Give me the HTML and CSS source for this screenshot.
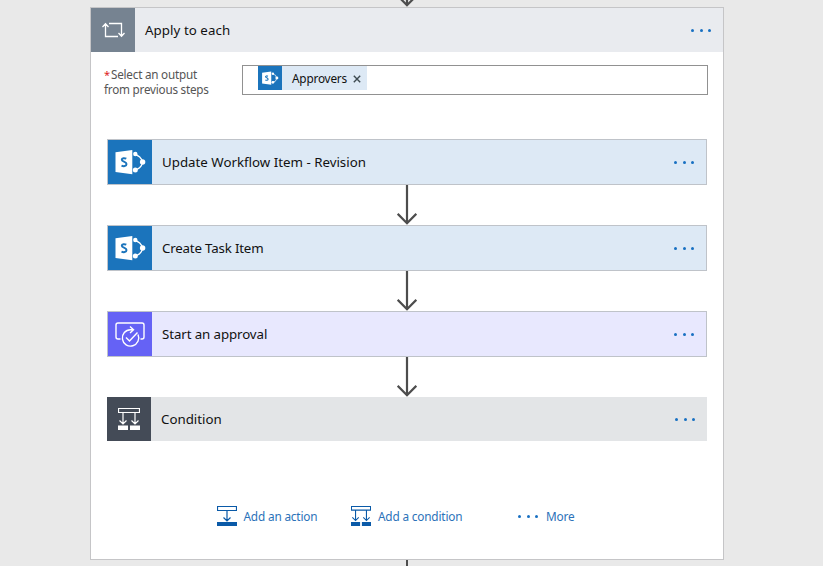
FILE: index.html
```html
<!DOCTYPE html>
<html lang="en">
<head>
<meta charset="utf-8">
<title>Apply to each</title>
<link rel="stylesheet" href="styles.css">
</head>
<body>
<svg width="0" height="0" class="defs">
  <symbol id="sharepoint" viewBox="0 0 44 44">
    <path d="M26 14.500a9 9 0 0 1 8.500 8a9 9 0 0 1-8.500 7.500" fill="none" stroke="#fff" stroke-width="1.300"/>
    <circle cx="27.300" cy="14" r="2.200" fill="#fff"/>
    <circle cx="34.600" cy="22" r="2.700" fill="#fff"/>
    <circle cx="27.300" cy="30" r="2.500" fill="#fff"/>
    <path d="M7.500 12.200 24.300 10v24.200L7.500 32z" fill="#fff"/>
    <path d="M18.300 18.700c-1.600-.8-4.500-.9-4.500 1.100 0 2.200 4.700 1.600 4.700 4.300 0 2.300-3.100 2.400-5 1.500" fill="none" stroke="#1b74bc" stroke-width="2"/>
  </symbol>
  <symbol id="arrow" viewBox="0 0 20 40">
    <path d="M10 0v38M.7 28.800 10 38.300l9.300-9.500" fill="none" stroke="#4d4d4d" stroke-width="2.200"/>
  </symbol>
  <symbol id="branch" viewBox="0 0 22 22">
    <path d="M.5.500h21v4H.5zM5 4.500v11.500M1.500 12.500 5 16l3.500-3.500M17 4.500v11.500M13.500 12.500 17 16l3.500-3.500" fill="none" stroke="currentColor" stroke-width="1.200"/>
    <path d="M0 17.500h10V22H0zM12 17.500h10V22H12z" fill="currentColor"/>
  </symbol>
</svg>
<svg class="arrow arrow-in"><use href="#arrow"/></svg>
<main class="panel">
  <header class="head">
    <div class="tile loop">
      <svg width="44" height="44" fill="none" stroke="#fff" stroke-width="1.300"><path d="M14.500 16.500V28.500H27M11.500 19l3-3.200 3 3.200M18 15.500H30.500V28M27.500 25l3 3.200 3-3.200"/></svg>
    </div>
    <span class="title t-head">Apply to each</span>
    <span class="dots"><i></i><i></i><i></i></span>
  </header>
  <div class="field">
    <div class="label">
      <div class="line"><span class="star">*</span><span>Select an output</span></div>
      <div class="line">from previous steps</div>
    </div>
    <div class="input">
      <div class="token">
        <div class="mini"><svg width="24" height="24"><use href="#sharepoint"/></svg></div>
        <span class="token-name">Approvers</span>
        <svg class="close" width="8" height="8"><path d="M.8.800 7.200 7.200M7.200.800.800 7.200" stroke="#3d4a50" stroke-width="1.400"/></svg>
      </div>
    </div>
  </div>
  <section class="steps">
    <div class="card">
      <div class="tile sp"><svg width="44" height="44"><use href="#sharepoint"/></svg></div>
      <span class="title">Update Workflow Item - Revision</span>
      <span class="dots"><i></i><i></i><i></i></span>
    </div>
    <svg class="arrow"><use href="#arrow"/></svg>
    <div class="card">
      <div class="tile sp"><svg width="44" height="44"><use href="#sharepoint"/></svg></div>
      <span class="title t-task">Create Task Item</span>
      <span class="dots"><i></i><i></i><i></i></span>
    </div>
    <svg class="arrow"><use href="#arrow"/></svg>
    <div class="card approval">
      <div class="tile ap">
        <svg width="44" height="44" fill="none" stroke="#fff" stroke-width="1.400"><path d="M12.500 27H10a2 2 0 0 1-2-2V13a2 2 0 0 1 2-2H34a2 2 0 0 1 2 2V25a2 2 0 0 1-2 2H32.500M25 17.700H22.500A8.200 8.200 0 1 0 30 22.500M22 14.500l3.500 3.200-3.500 3.200M18 25.500l3.500 3.500 8-8.500"/></svg>
      </div>
      <span class="title t-approval">Start an approval</span>
      <span class="dots"><i></i><i></i><i></i></span>
    </div>
    <svg class="arrow"><use href="#arrow"/></svg>
    <div class="card condition">
      <div class="tile cond"><svg width="22" height="22"><use href="#branch"/></svg></div>
      <span class="title">Condition</span>
      <span class="dots"><i></i><i></i><i></i></span>
    </div>
  </section>
  <footer class="actions">
    <a class="action add"><svg width="20" height="20"><path d="M.5.500h19v4H.5zM10 4.500V15M6.500 11.500 10 15l3.500-3.500" fill="none" stroke="#0a5aa8" stroke-width="1.200"/><path d="M0 16h20v4H0z" fill="#0a5aa8"/></svg><span>Add an action</span></a>
    <a class="action cnd"><svg width="20" height="20"><use href="#branch"/></svg><span>Add a condition</span></a>
    <a class="action more"><span class="dots"><i></i><i></i><i></i></span><span>More</span></a>
  </footer>
</main>
<div class="tail"></div>
</body>
</html>
```
FILE: styles.css
```css
* { box-sizing: border-box; }
body {
  margin: 0;
  height: 566px;
  overflow: hidden;
  background: #e9e9e9;
  font-family: "Noto Sans", "Open Sans", sans-serif;
  color: #111;
}
svg { display: block; flex: none; }
.defs { position: absolute; }
.arrow { width: 20px; height: 40px; margin-left: 290px; }
.arrow-in { margin: -33px 0 0 397px; }
.panel {
  width: 634px;
  height: 553px;
  margin-left: 90px;
  background: #fff;
  border: 1px solid #c5c5c7;
}
.head, .card { display: flex; align-items: center; }
.head { height: 44px; background: #e9ebef; padding-right: 12px; }
.tile {
  width: 44px;
  height: 44px;
  flex: none;
  display: flex;
  align-items: center;
  justify-content: center;
}
.loop { background: #768391; }
.sp { background: #1b74bc; }
.ap { background: #6562f5; }
.cond { background: #444b57; color: #fff; }
.title {
  margin-left: 10px;
  font-size: 13.3px;
  line-height: 20px;
  white-space: nowrap;
}
.t-head { letter-spacing: 0.06px; }
.t-task { letter-spacing: -0.18px; }
.t-approval { letter-spacing: -0.1px; }
.dots { display: flex; gap: 5.5px; margin-left: auto; }
.dots i { width: 3px; height: 3px; border-radius: 50%; background: #1870c2; }
.field { display: flex; height: 43px; padding: 13px 15px 0 13px; }
.label {
  width: 138px;
  padding-top: 2px;
  font-size: 11.7px;
  letter-spacing: -0.22px;
  color: #555;
  white-space: nowrap;
}
.line { display: flex; height: 15px; line-height: 15px; }
.star { width: 7px; color: #d22; font-size: 11px; }
.input {
  width: 466px;
  height: 30px;
  border: 1px solid #919191;
  padding-left: 15px;
}
.token {
  display: flex;
  align-items: center;
  width: 109px;
  height: 24px;
  background: #dde9f5;
}
.mini { width: 24px; height: 24px; background: #1b74bc; }
.token-name {
  margin-left: 10px;
  width: 56px;
  font-size: 11.8px;
  letter-spacing: -0.2px;
  white-space: nowrap;
}
.close { margin-left: 5px; margin-top: 2px; }
.steps { width: 600px; margin: 44px 0 0 16px; }
.card {
  height: 46px;
  border: 1px solid #bfc3c9;
  background: #dde9f5;
  padding-right: 12px;
}
.approval { background: #e8e8fe; }
.condition { height: 44px; border: 0; background: #e3e5e7; }
.actions { display: flex; margin: 65px 0 0 126px; height: 20px; }
.action {
  display: flex;
  align-items: center;
  gap: 7px;
  font-size: 11.8px;
  letter-spacing: -0.17px;
  color: #2b72b9;
  white-space: nowrap;
}
.action svg { color: #0a5aa8; }
.add { width: 134px; gap: 6.5px; }
.cnd { width: 167px; }
.more { gap: 8px; }
.more .dots { margin: 0; }
.tail { width: 2px; height: 6px; margin-left: 406px; background: #4d4d4d; }
```
